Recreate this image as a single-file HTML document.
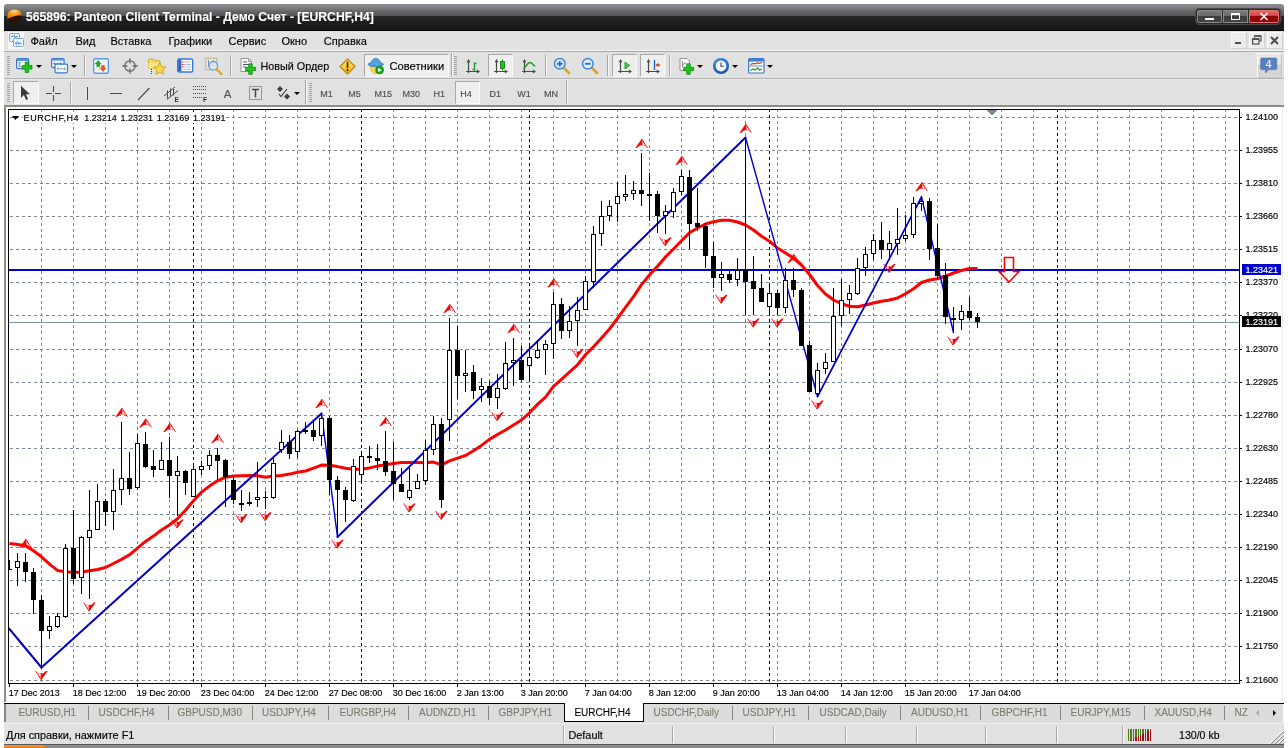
<!DOCTYPE html>
<html><head><meta charset="utf-8"><title>565896: Panteon Client Terminal</title>
<style>
html,body{margin:0;padding:0}
body{width:1288px;height:748px;background:#fff;position:relative;overflow:hidden;font-family:"Liberation Sans",sans-serif;font-size:11px;color:#000}
.abs{position:absolute}
div,span{box-sizing:border-box}
body{will-change:transform}
.t{position:absolute;white-space:pre;line-height:14px;-webkit-text-stroke:0.15px}
.sep{position:absolute;width:2px;border-left:1px solid #a6a6a6;border-right:1px solid #f6f6f6}
.grip{position:absolute;width:3px;background:repeating-linear-gradient(to bottom,#a2a2a2 0,#a2a2a2 1px,transparent 1px,transparent 2px)}
.pr{position:absolute;background:#efefef;border:1px solid;border-color:#a9a9a9 #fbfbfb #fbfbfb #a9a9a9}
.dd{position:absolute;width:0;height:0;border-left:3px solid transparent;border-right:3px solid transparent;border-top:3px solid #000}
.tf{-webkit-text-stroke:0.12px;position:absolute;top:86.5px;font-size:9px;color:#4a4a4a;line-height:14px;white-space:pre}
.tab{-webkit-text-stroke:0.12px;position:absolute;top:706px;font-size:10px;color:#7e7c6c;line-height:14px;white-space:pre}
.tsep{position:absolute;top:706px;width:1px;height:14px;background:#8a8878}
.ssep{position:absolute;top:726px;width:2px;height:17px;border-left:1px solid #a9a9a9;border-right:1px solid #fafafa}
.mdi{position:absolute;top:32px;width:16px;height:17px;background:#ececec;border:1px solid;border-color:#f8f8f8 #d2d2d2 #d2d2d2 #f8f8f8}
</style></head><body>

<div class="abs" style="left:4px;top:4px;width:1280px;height:27px;border-radius:3px 3px 0 0;background:linear-gradient(to bottom,#85868a 0,#8c8d91 1px,#7d7e82 4px,#626365 8px,#545456 12px,#252628 12.3px,#1c1c1e 20px,#19191b 26px,#000 26px,#000 27px)"></div>
<svg class="abs" style="left:6px;top:8px" width="17" height="18" viewBox="0 0 17 18"><defs><radialGradient id="og" cx="50%" cy="20%" r="70%"><stop offset="0" stop-color="#ffd79a"/><stop offset=".5" stop-color="#f79a1e"/><stop offset="1" stop-color="#e07a00"/></radialGradient></defs>
<ellipse cx="8.3" cy="9" rx="7" ry="7.6" fill="#2a1200"/><path d="M1.3 9.5C1 4 4 1.2 8.3 1.2S15.6 4 15.3 7.2C11 7.2 5 8.5 1.3 11Z" fill="url(#og)"/></svg>
<div class="t" style="left:26px;top:9px;font-size:12.2px;font-weight:bold;color:#fff;line-height:16px;letter-spacing:-0.01px;text-shadow:0 0 1px rgba(0,0,0,.6)">565896: Panteon Client Terminal - Демо Счет - [EURCHF,H4]</div>
<div class="abs" style="left:1195px;top:8px;width:86px;height:17px;border-radius:4px;background:#2a2a2c;border:1px solid #4a4a4c"></div>
<div class="abs" style="left:1197px;top:10px;width:25px;height:13px;border-radius:2px 0 0 2px;border:1px solid #8a8a8a;background:linear-gradient(to bottom,#7a7a7a 0,#6a6a6a 48%,#3c3c3c 50%,#444 100%)"></div>
<div class="abs" style="left:1223px;top:10px;width:25px;height:13px;border:1px solid #8a8a8a;background:linear-gradient(to bottom,#7a7a7a 0,#6a6a6a 48%,#3c3c3c 50%,#444 100%)"></div>
<div class="abs" style="left:1249px;top:10px;width:30px;height:13px;border-radius:0 2px 2px 0;border:1px solid #e07070;background:linear-gradient(to bottom,#e86a6a 0,#d24040 48%,#8c0000 50%,#980808 100%)"></div>
<div class="abs" style="left:1205px;top:18px;width:9px;height:2px;background:#fff"></div>
<div class="abs" style="left:1231px;top:13px;width:9px;height:7px;border:1px solid #fff;border-top-width:2px"></div>
<svg class="abs" style="left:1259px;top:12px" width="10" height="9" viewBox="0 0 10 9"><path d="M1.5 1L8.5 8M8.5 1L1.5 8" stroke="#fff" stroke-width="1.7"/></svg>
<div class="abs" style="left:4px;top:31px;width:1280px;height:19px;background:#e2e2e2"></div>
<div class="abs" style="left:4px;top:50px;width:1280px;height:1px;background:#f4f4f4"></div>
<div class="abs" style="left:4px;top:51px;width:1280px;height:1px;background:#a9a9a9"></div>
<div class="abs" style="left:8px;top:32px;width:16px;height:17px;background:#fbfbfb"></div>
<svg class="abs" style="left:9px;top:33px" width="15" height="15" viewBox="0 0 15 15" fill="none"><rect x=".5" y=".5" width="10" height="8" rx="1" fill="#e8f0fb" stroke="#3a76d0" stroke-dasharray="1 .6"/><rect x="4.5" y="5.5" width="10" height="8" rx="1" fill="#f4f8ff" stroke="#3a76d0" stroke-dasharray="1 .6"/><path d="M2 3.5h2l1 -1.5 1 3 1-1.5h2" stroke="#3a76d0" stroke-width=".8"/><path d="M6 9.5l1.2 2 1.3-3 1.3 3 1.2-2 1.3 1.6" stroke="#3a76d0" stroke-width=".9"/></svg>
<div class="t" style="left:30.5px;top:34px;font-size:11px">Файл</div>
<div class="t" style="left:75.5px;top:34px;font-size:11px">Вид</div>
<div class="t" style="left:110.5px;top:34px;font-size:11px">Вставка</div>
<div class="t" style="left:168.5px;top:34px;font-size:11px">Графики</div>
<div class="t" style="left:228.5px;top:34px;font-size:11px">Сервис</div>
<div class="t" style="left:281.5px;top:34px;font-size:11px">Окно</div>
<div class="t" style="left:323.8px;top:34px;font-size:11px">Справка</div>
<div class="mdi" style="left:1231px"></div><div class="mdi" style="left:1249px"></div><div class="mdi" style="left:1267px"></div>
<div class="abs" style="left:1235px;top:42px;width:6px;height:2px;background:#4c4c4c"></div>
<svg class="abs" style="left:1252px;top:35px" width="10" height="10" viewBox="0 0 10 10" fill="none" stroke="#4c4c4c"><path d="M2.5 2.5V1H9v5H7.5" stroke-width="1.2"/><path d="M2.5 1H9" stroke-width="1.6"/><rect x=".6" y="4" width="6.4" height="5" stroke-width="1.2"/><path d="M.6 4H7" stroke-width="1.8"/></svg>
<svg class="abs" style="left:1270px;top:36px" width="9" height="9" viewBox="0 0 9 9"><path d="M1 1L8 8M8 1L1 8" stroke="#4c4c4c" stroke-width="2"/></svg>
<div class="abs" style="left:4px;top:52px;width:1280px;height:26px;background:#e1e1e1"></div>
<div class="abs" style="left:4px;top:78px;width:1280px;height:1px;background:#b2b2b2"></div>
<div class="abs" style="left:4px;top:79px;width:1280px;height:26px;background:linear-gradient(to bottom,#f0f0f0 0,#e1e1e1 1px,#e1e1e1 100%)"></div>
<div class="grip" style="left:7px;top:56px;height:19px"></div>
<svg class="abs" style="left:16px;top:57px" width="18" height="17" viewBox="0 0 18 17" fill="none" ><rect x=".6" y="1.6" width="12" height="10" rx="1.2" fill="#eaf2fc" stroke="#3b78c8" stroke-width="1.2"/><rect x="1" y="2" width="11.2" height="2" fill="#5b93dc"/><path d="M3.5 5v5M2.4 6.2L3.5 5l1.1 1.2M2.4 8.8L3.5 10l1.1-1.2" stroke="#6a8ab0" stroke-width=".8"/><path d="M6.2 8.6h3v-3.5h3.4v3.5h3.4v3.4h-3.4v3.6h-3.4v-3.6h-3.4z" fill="#1fc21f" stroke="#0a8a0a" stroke-width=".8"/></svg>
<div class="dd" style="left:36px;top:65px"></div>
<svg class="abs" style="left:51px;top:57px" width="18" height="17" viewBox="0 0 18 17" fill="none" ><rect x=".6" y="1.6" width="12.5" height="9" rx="1.2" fill="#eaf2fc" stroke="#3b78c8" stroke-width="1.2"/><rect x="1" y="2" width="11.6" height="1.6" fill="#5b93dc"/><path d="M2.5 6.5h8M2.5 6.5l1.3-1.2M2.5 6.5l1.3 1.2M10.5 6.5l-1.3-1.2M10.5 6.5l-1.3 1.2" stroke="#6a8ab0" stroke-width=".8"/><rect x="4" y="7.2" width="12.5" height="8.6" rx="1.2" fill="#f2f7fd" stroke="#3b78c8" stroke-width="1.2"/><path d="M6 11.8h8.5M6 11.8l1.3-1.2M6 11.8l1.3 1.2M14.5 11.8l-1.3-1.2M14.5 11.8l-1.3 1.2" stroke="#6a8ab0" stroke-width=".8"/></svg>
<div class="dd" style="left:71px;top:65px"></div>
<div class="sep" style="left:84px;top:55px;height:21px"></div>
<svg class="abs" style="left:93px;top:58px" width="17" height="17" viewBox="0 0 17 17" fill="none" ><rect x=".7" y=".7" width="14.6" height="14.6" rx="1.5" fill="#f8fbff" stroke="#5a9be6" stroke-width="1.4"/><path d="M9 4h5M9 6h5M9 8h5M2 10h5M2 12h5" stroke="#d8dde4" stroke-width=".8"/><path d="M5.2 2.6L8.2 6H6.6v2.6H3.8V6H2.2Z" fill="#22b022" stroke="#0d7a0d" stroke-width=".5"/><path d="M10 13.6L7 10.2h1.6V7.6h2.8v2.6H13Z" fill="#f05a28" stroke="#b83a10" stroke-width=".5"/></svg>
<svg class="abs" style="left:121px;top:57px" width="18" height="18" viewBox="0 0 18 18" fill="none" ><circle cx="9" cy="9" r="5.2" stroke="#6a6a6a" stroke-width="1.3"/><path d="M9 1.2V6.4M9 11.6V16.8M1.2 9H6.4M11.6 9H16.8" stroke="#6a6a6a" stroke-width="1.3"/></svg>
<svg class="abs" style="left:147px;top:57px" width="20" height="19" viewBox="0 0 20 19" fill="none" ><path d="M1.5 3.5c0-1 .6-1.6 1.6-1.6h3l1.4 1.6h4.2c.8 0 1.3.5 1.3 1.3v6.6H1.5z" fill="#f3d76b" stroke="#c9a227" stroke-width=".9"/><path d="M1.5 6h11.5v5.4H1.5z" fill="#fbe88e"/><path d="M4.5 12v6" stroke="#333" stroke-width="1" stroke-dasharray="1 1"/><path d="M12.8 5.8l1.9 3.9 4.2.5-3.1 2.9.8 4.2-3.8-2.1-3.8 2.1.8-4.2-3.1-2.9 4.2-.5z" fill="#ffd84a" stroke="#c9981a" stroke-width=".9"/></svg>
<svg class="abs" style="left:177px;top:58px" width="17" height="16" viewBox="0 0 17 16" fill="none" ><rect x=".7" y="1" width="15" height="13" rx="1.5" fill="#fff" stroke="#3b78d8" stroke-width="1.4"/><rect x="1.2" y="1.6" width="3.2" height="11.8" fill="#2f62c4"/><path d="M6 4h8M6 6.5h8M6 9h8M6 11.5h8" stroke="#9ab0d0" stroke-width=".8"/><path d="M5 4h1.2M5 6.5h1.2M5 9h1.2" stroke="#e02020" stroke-width="1"/></svg>
<svg class="abs" style="left:205px;top:57px" width="19" height="19" viewBox="0 0 19 19" fill="none" ><rect x=".8" y="1.2" width="11" height="11.5" fill="#f1ead6" stroke="#b9ad8c" stroke-width=".9"/><path d="M3.5 3v7M3.5 8.5h6M8.5 3v6" stroke="#6e7f96" stroke-width=".9"/><circle cx="8.3" cy="8.8" r="4.3" fill="#d6e8fa" fill-opacity=".85" stroke="#6aa0dc" stroke-width="1.3"/><path d="M11.6 12.2l5 5" stroke="#d9a520" stroke-width="2.2" stroke-linecap="round"/></svg>
<div class="sep" style="left:230px;top:55px;height:21px"></div>
<svg class="abs" style="left:240px;top:57px" width="18" height="19" viewBox="0 0 18 19" fill="none" ><path d="M1 1.5h7.5l3 3v10H1z" fill="#fafafa" stroke="#8a8a8a" stroke-width=".9"/><path d="M8.5 1.5v3h3" stroke="#8a8a8a" stroke-width=".8"/><path d="M3 5h4M3 7.5h6M3 10h3" stroke="#555" stroke-width="1"/><path d="M5.8 10.3h3v-3.5h3.4v3.5h3.4v3.4h-3.4v3.6h-3.4v-3.6h-3.4z" fill="#1fc21f" stroke="#0a8a0a" stroke-width=".8"/></svg>
<div class="t" style="left:260.5px;top:59px;font-size:10.8px">Новый Ордер</div>
<svg class="abs" style="left:339px;top:58px" width="17" height="17" viewBox="0 0 17 17" fill="none" ><defs><linearGradient id="dg" x1="0" y1="0" x2="0" y2="1"><stop offset="0" stop-color="#ffe88a"/><stop offset="1" stop-color="#f0b000"/></linearGradient></defs><path d="M8.5 1L16 8.500 8.500 16 1 8.500Z" fill="url(#dg)" stroke="#c28a00" stroke-width="1.2" stroke-linejoin="round"/><path d="M8.500 4.500v5" stroke="#5a3a00" stroke-width="1.8" stroke-linecap="round"/><circle cx="8.500" cy="12.200" r="1.100" fill="#5a3a00"/></svg>
<div class="pr" style="left:364px;top:54px;width:85px;height:23px"></div>
<svg class="abs" style="left:367px;top:57px" width="18" height="18" viewBox="0 0 18 18" fill="none" ><path d="M3 8.5c0 5 2.4 8 5.6 8s5.6-3 5.6-8z" fill="#ffd54a" stroke="#d9a520" stroke-width=".7"/><path d="M.8 7.4c1-1.2 2.6-1.6 3.4-1.8C4.6 3 6.4 1.4 8.8 1.4s4.2 1.6 4.6 4.2c1.4.2 2.6.8 3.4 1.8-1.6 1.6-4.6 2.4-8 2.4s-6.400-.8-8-2.400z" fill="#4fa3e0" stroke="#2a78b8" stroke-width=".7"/><circle cx="12.6" cy="13" r="4" fill="#1aa51a" stroke="#0b7a0b" stroke-width=".6"/><path d="M11.200 10.800v4.400l3.600-2.200z" fill="#fff"/></svg>
<div class="t" style="left:389.500px;top:59px;font-size:11.200px">Советники</div>
<div class="sep" style="left:451px;top:53px;height:24px"></div>
<div class="grip" style="left:454px;top:56px;height:19px"></div>
<svg class="abs" style="left:465px;top:59px" width="16" height="16" viewBox="0 0 16 16" fill="none" ><path d="M3.5 1.5V14M1 12.5H14" stroke="#4a4a4a" stroke-width="1.2"/><path d="M3.5 0L1.6 3.2H5.4ZM15 12.5L11.8 10.6V14.4Z" fill="#4a4a4a"/><path d="M9.500 3.500v8M7.500 10.500h2M9.500 4.500h2" stroke="#1a9a1a" stroke-width="1.300"/></svg>
<div class="pr" style="left:488px;top:54px;width:25px;height:23px"></div>
<svg class="abs" style="left:493px;top:59px" width="16" height="16" viewBox="0 0 16 16" fill="none" ><path d="M3.5 1.5V14M1 12.5H14" stroke="#4a4a4a" stroke-width="1.2"/><path d="M3.5 0L1.6 3.2H5.4ZM15 12.5L11.8 10.6V14.4Z" fill="#4a4a4a"/><path d="M9.500 .5v11" stroke="#1a7a1a" stroke-width="1"/><rect x="7.500" y="2.500" width="4" height="7" fill="#22c022" stroke="#0d7a0d" stroke-width=".8"/></svg>
<svg class="abs" style="left:521px;top:59px" width="16" height="16" viewBox="0 0 16 16" fill="none" ><path d="M3.5 1.5V14M1 12.5H14" stroke="#4a4a4a" stroke-width="1.2"/><path d="M3.5 0L1.6 3.2H5.4ZM15 12.5L11.8 10.6V14.4Z" fill="#4a4a4a"/><path d="M2.500 10.500C5 7 7 3.500 9 3.500s3.500 2.500 5 4" stroke="#1a9a1a" stroke-width="1.300"/></svg>
<div class="sep" style="left:545px;top:55px;height:21px"></div>
<svg class="abs" style="left:553px;top:57px" width="18" height="18" viewBox="0 0 18 18" fill="none" ><path d="M10.600 10.600l5.400 5.400" stroke="#d9a520" stroke-width="2.600" stroke-linecap="round"/><circle cx="6.800" cy="6.800" r="5.300" fill="#dcecfb" stroke="#3f86dc" stroke-width="1.500"/><path d="M4 6.800h5.600" stroke="#2a6fcf" stroke-width="1.800"/><path d="M6.800 4v5.600" stroke="#2a6fcf" stroke-width="1.800"/></svg>
<svg class="abs" style="left:581px;top:57px" width="18" height="18" viewBox="0 0 18 18" fill="none" ><path d="M10.600 10.600l5.400 5.400" stroke="#d9a520" stroke-width="2.600" stroke-linecap="round"/><circle cx="6.800" cy="6.800" r="5.300" fill="#dcecfb" stroke="#3f86dc" stroke-width="1.500"/><path d="M4 6.800h5.600" stroke="#2a6fcf" stroke-width="1.800"/></svg>
<div class="sep" style="left:607px;top:55px;height:21px"></div>
<div class="pr" style="left:612px;top:54px;width:25px;height:23px"></div>
<svg class="abs" style="left:617px;top:59px" width="16" height="16" viewBox="0 0 16 16" fill="none" ><path d="M3.5 1.5V14M1 12.5H14" stroke="#4a4a4a" stroke-width="1.2"/><path d="M3.5 0L1.6 3.2H5.4ZM15 12.5L11.8 10.6V14.4Z" fill="#4a4a4a"/><path d="M8 3.200v6.600l4.600-3.300z" fill="#5ad05a" stroke="#1a9a1a" stroke-width="1"/></svg>
<div class="pr" style="left:640px;top:54px;width:25px;height:23px"></div>
<svg class="abs" style="left:645px;top:59px" width="16" height="16" viewBox="0 0 16 16" fill="none" ><path d="M3.5 1.5V14M1 12.5H14" stroke="#4a4a4a" stroke-width="1.2"/><path d="M3.5 0L1.6 3.2H5.4ZM15 12.5L11.8 10.6V14.4Z" fill="#4a4a4a"/><path d="M9.500 1v10" stroke="#1f5fb8" stroke-width="1.300"/><path d="M10.400 6l3-2.200v1.400h1.600v1.600h-1.600v1.400z" fill="#d84a10"/></svg>
<div class="sep" style="left:669px;top:55px;height:21px"></div>
<svg class="abs" style="left:679px;top:57px" width="18" height="19" viewBox="0 0 18 19" fill="none" ><path d="M1 1.500h7l2.500 2.500v9.500H1z" fill="#fafafa" stroke="#8a8a8a" stroke-width=".9"/><path d="M3.500 4v6M3 9c1.500-2 2.500-3 4-3" stroke="#777" stroke-width=".9"/><path d="M4.8 10.3h3v-3.5h3.4v3.5h3.4v3.4h-3.4v3.6h-3.4v-3.6h-3.4z" fill="#1fc21f" stroke="#0a8a0a" stroke-width=".8"/></svg>
<div class="dd" style="left:697px;top:65px"></div>
<svg class="abs" style="left:712px;top:57px" width="18" height="18" viewBox="0 0 18 18" fill="none" ><defs><radialGradient id="cg" cx="45%" cy="35%" r="65%"><stop offset="0" stop-color="#5aa8f0"/><stop offset="1" stop-color="#0d4fb0"/></radialGradient></defs><circle cx="9" cy="9" r="8" fill="url(#cg)"/><circle cx="9" cy="9" r="5.400" fill="#f4f8fc"/><path d="M9 5.500V9.300h2.800" stroke="#444" stroke-width="1.100"/></svg>
<div class="dd" style="left:732px;top:65px"></div>
<svg class="abs" style="left:748px;top:58px" width="17" height="16" viewBox="0 0 17 16" fill="none" ><rect x=".6" y=".6" width="15.400" height="14.400" rx="1" fill="#fff" stroke="#3b78c8" stroke-width="1.200"/><rect x="1" y="1" width="14.600" height="2.600" fill="#3f7fd6"/><path d="M1 8h14.600" stroke="#3b78c8" stroke-width=".8"/><path d="M2.500 6.500l2.500-1 2 .5 2.500-1.200 2 .7 2.500-1" stroke="#c0281a" stroke-width="1.100"/><path d="M2.500 12.500l2.500-1.500 2 1 2.500-2 2 2 2.500-1" stroke="#1a9a1a" stroke-width="1.100"/></svg>
<div class="dd" style="left:767px;top:65px"></div>
<div class="abs" style="left:1257px;top:53px;width:25px;height:25px;background:linear-gradient(to bottom,#e6e6e6 0,#e6e6e6 45%,#cfcfcf 50%,#d8d8d8 100%);border:1px solid;border-color:#fafafa #c8c8c8 #c8c8c8 #fafafa"></div>
<svg class="abs" style="left:1260px;top:57px" width="18" height="17" viewBox="0 0 18 17" fill="none" ><path d="M2 1h13.500c.8 0 1.300.5 1.300 1.300v9c0 .8-.5 1.300-1.300 1.300H8.500L5.500 16V12.600H2C1.200 12.600.7 12.100.7 11.300v-9C.7 1.500 1.200 1 2 1z" fill="#5b7fbe" stroke="#4a6cab" stroke-width=".6"/><text x="5.600" y="10.600" font-size="11" fill="#fff" font-family="'Liberation Sans',sans-serif">4</text></svg>
<div class="grip" style="left:7px;top:83px;height:19px"></div>
<div class="pr" style="left:13px;top:81px;width:26px;height:23px"></div>
<svg class="abs" style="left:20px;top:85px" width="11" height="16" viewBox="0 0 11 16" fill="none" ><path d="M1 .8v12l2.900-2.700 2.200 4.800 2-.9-2.200-4.700h4z" fill="#3c3c3c"/></svg>
<svg class="abs" style="left:45px;top:85px" width="17" height="17" viewBox="0 0 17 17" fill="none" ><path d="M8.500 1v6M8.500 10v6M1 8.500h6M10 8.500h6" stroke="#4a4a4a" stroke-width="1.100"/></svg>
<div class="sep" style="left:70px;top:82px;height:21px"></div>
<div class="abs" style="left:87px;top:87px;width:1px;height:13px;background:#4a4a4a"></div>
<div class="abs" style="left:110px;top:93px;width:12px;height:1px;background:#4a4a4a"></div>
<svg class="abs" style="left:137px;top:86px" width="14" height="15" viewBox="0 0 14 15" fill="none" ><path d="M1 14L12.500 2" stroke="#4a4a4a" stroke-width="1.100"/></svg>
<svg class="abs" style="left:163px;top:85px" width="17" height="17" viewBox="0 0 17 17" fill="none" ><path d="M1 11L12 2M4 14.500L15 5.500M4.500 5.500v8M7.500 3.500v8M10.500 4v6.500" stroke="#4a4a4a" stroke-width="1"/><text x="11.500" y="16.500" font-size="6.500" font-weight="bold" fill="#333" font-family="'Liberation Sans',sans-serif">E</text></svg>
<svg class="abs" style="left:192px;top:85px" width="17" height="17" viewBox="0 0 17 17" fill="none" ><path d="M1 1.500h13M1 4.500h13M1 8.500h13M1 12.500h9" stroke="#4a4a4a" stroke-width="1" stroke-dasharray="1 1"/><text x="11" y="16.500" font-size="6.500" font-weight="bold" fill="#333" font-family="'Liberation Sans',sans-serif">F</text></svg>
<div class="t" style="left:223.800px;top:87px;font-size:11.500px;color:#555">A</div>
<svg class="abs" style="left:249px;top:85px" width="14" height="16" viewBox="0 0 14 16" fill="none" ><rect x=".5" y="1.500" width="12" height="13" stroke="#4a4a4a" stroke-width="1" stroke-dasharray="1 1"/><path d="M3 4.500h7M6.500 4.500v8" stroke="#4a4a4a" stroke-width="1.500"/></svg>
<svg class="abs" style="left:276px;top:85px" width="16" height="16" viewBox="0 0 16 16" fill="none" ><path d="M4 1l3 3-3 3-3-3zM11 8.500l3 3-3 3-3-3z" fill="#3c3c3c"/><path d="M3 9l2 2.500L11 4" stroke="#3c3c3c" stroke-width="1.100"/></svg>
<div class="dd" style="left:294px;top:92px"></div>
<div class="sep" style="left:305px;top:80px;height:24px"></div>
<div class="grip" style="left:309px;top:83px;height:19px"></div>
<div class="tf" style="left:320.3px">M1</div>
<div class="tf" style="left:348.3px">M5</div>
<div class="tf" style="left:374.4px">M15</div>
<div class="tf" style="left:402.5px">M30</div>
<div class="tf" style="left:433.5px">H1</div>
<div class="tf" style="left:489.4px">D1</div>
<div class="tf" style="left:517.2px">W1</div>
<div class="tf" style="left:543.9px">MN</div>
<div class="pr" style="left:455px;top:81px;width:25px;height:23px"></div>
<div class="tf" style="left:460.300px">H4</div>
<div class="sep" style="left:566px;top:80px;height:24px"></div>
<svg class="abs" style="left:0;top:105px" width="1288" height="598" viewBox="0 105 1288 598" font-family="'Liberation Sans',sans-serif" font-size="9" stroke-width="0.16">
<rect x="4" y="105" width="1280" height="598" fill="#fff"/>
<rect x="4" y="105" width="1280" height="2" fill="#8e8e86"/>
<rect x="4" y="105" width="2" height="597" fill="#8e8e86"/>
<rect x="1282" y="107" width="1" height="595" fill="#ececec"/>
<g shape-rendering="crispEdges">
<g stroke="#778899" stroke-width="1" stroke-dasharray="3 3" fill="none">
<path d="M9 117.5H1239" stroke-dashoffset="5"/>
<path d="M9 150.5H1239" stroke-dashoffset="5"/>
<path d="M9 183.5H1239" stroke-dashoffset="5"/>
<path d="M9 216.5H1239" stroke-dashoffset="5"/>
<path d="M9 249.5H1239" stroke-dashoffset="5"/>
<path d="M9 282.5H1239" stroke-dashoffset="5"/>
<path d="M9 315.5H1239" stroke-dashoffset="5"/>
<path d="M9 349.5H1239" stroke-dashoffset="5"/>
<path d="M9 382.5H1239" stroke-dashoffset="5"/>
<path d="M9 415.5H1239" stroke-dashoffset="5"/>
<path d="M9 448.5H1239" stroke-dashoffset="5"/>
<path d="M9 481.5H1239" stroke-dashoffset="5"/>
<path d="M9 514.5H1239" stroke-dashoffset="5"/>
<path d="M9 547.5H1239" stroke-dashoffset="5"/>
<path d="M9 580.5H1239" stroke-dashoffset="5"/>
<path d="M9 613.5H1239" stroke-dashoffset="5"/>
<path d="M9 646.5H1239" stroke-dashoffset="5"/>
<path d="M9 680.5H1239" stroke-dashoffset="5"/>
<path d="M41.5 110V683" stroke-dashoffset="1"/>
<path d="M73.5 110V683" stroke-dashoffset="1"/>
<path d="M105.5 110V683" stroke-dashoffset="1"/>
<path d="M137.5 110V683" stroke-dashoffset="1"/>
<path d="M169.5 110V683" stroke-dashoffset="1"/>
<path d="M201.5 110V683" stroke-dashoffset="1"/>
<path d="M233.5 110V683" stroke-dashoffset="1"/>
<path d="M265.5 110V683" stroke-dashoffset="1"/>
<path d="M297.5 110V683" stroke-dashoffset="1"/>
<path d="M329.5 110V683" stroke-dashoffset="1"/>
<path d="M361.5 110V683" stroke-dashoffset="1" stroke="#000"/>
<path d="M393.5 110V683" stroke-dashoffset="1"/>
<path d="M425.5 110V683" stroke-dashoffset="1"/>
<path d="M457.5 110V683" stroke-dashoffset="1"/>
<path d="M489.5 110V683" stroke-dashoffset="1"/>
<path d="M521.5 110V683" stroke-dashoffset="1"/>
<path d="M553.5 110V683" stroke-dashoffset="1"/>
<path d="M585.5 110V683" stroke-dashoffset="1"/>
<path d="M617.5 110V683" stroke-dashoffset="1"/>
<path d="M649.5 110V683" stroke-dashoffset="1"/>
<path d="M681.5 110V683" stroke-dashoffset="1"/>
<path d="M713.5 110V683" stroke-dashoffset="1"/>
<path d="M745.5 110V683" stroke-dashoffset="1"/>
<path d="M777.5 110V683" stroke-dashoffset="1"/>
<path d="M809.5 110V683" stroke-dashoffset="1"/>
<path d="M841.5 110V683" stroke-dashoffset="1"/>
<path d="M873.5 110V683" stroke-dashoffset="1"/>
<path d="M905.5 110V683" stroke-dashoffset="1"/>
<path d="M937.5 110V683" stroke-dashoffset="1"/>
<path d="M969.5 110V683" stroke-dashoffset="1"/>
<path d="M1001.5 110V683" stroke-dashoffset="1"/>
<path d="M1033.5 110V683" stroke-dashoffset="1"/>
<path d="M1065.5 110V683" stroke-dashoffset="1"/>
<path d="M1097.5 110V683" stroke-dashoffset="1"/>
<path d="M1129.5 110V683" stroke-dashoffset="1"/>
<path d="M1161.5 110V683" stroke-dashoffset="1"/>
<path d="M1193.5 110V683" stroke-dashoffset="1"/>
<path d="M1225.5 110V683" stroke-dashoffset="1"/>
<path d="M193.5 110V683" stroke-dashoffset="1" stroke="#000"/>
<path d="M361.5 110V683" stroke-dashoffset="1" stroke="#000"/>
<path d="M529.5 110V683" stroke-dashoffset="1" stroke="#000"/>
<path d="M769.5 110V683" stroke-dashoffset="1" stroke="#000"/>
<path d="M1057.5 110V683" stroke-dashoffset="1" stroke="#000"/>
</g>
<rect x="9" y="322" width="1230" height="1" fill="#7f8fa4"/>
<rect x="9" y="269" width="1230" height="2" fill="#0000cd"/>
</g>
<polyline points="9.5,543.4 17.5,544.5 25.5,545.8 33.5,550.8 41.5,556.8 49.5,564.1 57.5,570.4 65.5,571.7 73.5,572.5 81.5,572.1 89.5,570.8 97.5,569.5 105.5,567.5 113.5,563.5 121.5,559.4 129.5,554.8 137.5,548.1 145.5,541.4 153.5,536.1 161.5,530 169.5,524.9 177.5,518.8 185.5,510.2 193.5,500.8 201.5,492.1 209.5,486.1 217.5,480.8 225.5,477.2 233.5,476.1 241.5,475.8 249.5,475.4 257.5,475.8 265.5,477.2 273.5,476.1 281.5,475.4 289.5,474.1 297.5,472.3 305.5,471 313.5,468.1 321.5,465.1 329.5,465.3 337.5,466.6 345.5,468.2 353.5,469.2 361.5,469.2 369.5,467.9 377.5,466.1 385.5,464.8 393.5,463.5 401.5,462.5 409.5,462.5 417.5,462.5 425.5,462.8 433.5,462.1 441.5,464.8 449.5,460.8 457.5,458.1 465.5,455.5 473.5,450.8 481.5,445.4 489.5,439.4 497.5,434.5 505.5,430 513.5,425 521.5,420 529.5,412.8 537.5,404.4 545.5,397.2 553.5,386.4 561.5,379.4 569.5,372 577.5,364.8 585.5,354.7 593.5,346.7 601.5,338 609.5,329 617.5,318.4 625.5,307.4 633.5,296.7 641.5,284.6 649.5,275 657.5,266.3 665.5,257 673.5,249 681.5,240.7 689.5,232.7 697.5,228 705.5,224 713.5,221.7 721.5,220.2 729.5,220.2 737.5,222 745.5,225 753.5,230 761.5,236.25 769.5,241.25 777.5,248 785.5,253 793.5,258 801.5,265 809.5,274.5 817.5,285.5 825.5,294 833.5,300 841.5,303.75 849.5,306.25 857.5,306.75 865.5,305 873.5,303 881.5,301.25 889.5,300 897.5,298 905.5,293.75 913.5,288.75 921.5,282.5 929.5,280 937.5,278.75 945.5,276.25 953.5,273 961.5,270.5 969.5,268.5 977.5,268.5" fill="none" stroke="#ff0000" stroke-width="3" stroke-linejoin="round" stroke-linecap="butt"/>
<path d="M9 628.5L41.5 667.5" fill="none" stroke="#0000cd" stroke-width="2" stroke-linecap="round"/>
<path d="M41.5 667.5L321.5 413.5" fill="none" stroke="#0000cd" stroke-width="2" stroke-linecap="round"/>
<path d="M321.5 413.5L337.5 537" fill="none" stroke="#0000cd" stroke-width="1.4" stroke-linecap="round"/>
<path d="M337.5 537L745.5 137.5" fill="none" stroke="#0000cd" stroke-width="2" stroke-linecap="round"/>
<path d="M745.5 137.5L817.5 396.5" fill="none" stroke="#0000cd" stroke-width="1.4" stroke-linecap="round"/>
<path d="M817.5 396.5L921.5 197" fill="none" stroke="#0000cd" stroke-width="1.7" stroke-linecap="round"/>
<path d="M921.5 197L953.5 332.5" fill="none" stroke="#0000cd" stroke-width="1.4" stroke-linecap="round"/>
<defs>
<g id="fu"><path d="M0.3 0L-6.2 9.2L-4.4 9.1L-1.6 6.7L0.7 6.5L0.9 3.4L0.8 1Z" fill="#ff0000"/><path d="M0.5 0.6L5.9 9.1" stroke="#ff0000" stroke-width="0.9" fill="none"/><path d="M0.8 6.4L3.6 6.6M1.8 3.2L2 4.6" stroke="#ff0000" stroke-width="0.8" stroke-dasharray="1 0.8" fill="none"/></g>
<g id="fd"><path d="M-0.3 9.4L6.2 0.2L4.4 0.3L1.6 2.7L-0.7 2.9L-0.9 6L-0.8 8.4Z" fill="#ff0000"/><path d="M-0.5 8.8L-5.9 0.3" stroke="#ff0000" stroke-width="0.9" fill="none"/><path d="M-0.8 3L-3.6 2.800M-1.8 6.200L-2 4.800" stroke="#ff0000" stroke-width="0.8" stroke-dasharray="1 0.8" fill="none"/></g>
</defs>
<use href="#fu" x="25.5" y="538.7"/>
<use href="#fu" x="121.5" y="407.7"/>
<use href="#fu" x="145.5" y="418.2"/>
<use href="#fu" x="169.5" y="422.7"/>
<use href="#fu" x="217.5" y="433.7"/>
<use href="#fu" x="321.5" y="398.7"/>
<use href="#fu" x="385.5" y="416.95"/>
<use href="#fu" x="449.5" y="303.7"/>
<use href="#fu" x="513.5" y="323.7"/>
<use href="#fu" x="553.5" y="278.2"/>
<use href="#fu" x="641.5" y="138.7"/>
<use href="#fu" x="681.5" y="155.7"/>
<use href="#fu" x="745.5" y="123.7"/>
<use href="#fu" x="793.5" y="253.7"/>
<use href="#fu" x="921.5" y="181.95"/>
<use href="#fd" x="41.5" y="670.7"/>
<use href="#fd" x="89.5" y="602.2"/>
<use href="#fd" x="177.5" y="519.2"/>
<use href="#fd" x="241.5" y="513.95"/>
<use href="#fd" x="265.5" y="511.95"/>
<use href="#fd" x="337.5" y="539.45"/>
<use href="#fd" x="409.5" y="503.2"/>
<use href="#fd" x="441.5" y="510.7"/>
<use href="#fd" x="497.5" y="411.95"/>
<use href="#fd" x="577.5" y="348.7"/>
<use href="#fd" x="665.5" y="236.95"/>
<use href="#fd" x="721.5" y="294.45"/>
<use href="#fd" x="753.5" y="318.2"/>
<use href="#fd" x="777.5" y="318.2"/>
<use href="#fd" x="817.5" y="400.2"/>
<use href="#fd" x="889.5" y="263.7"/>
<use href="#fd" x="953.5" y="336.2"/>
<g shape-rendering="crispEdges">
<rect x="9" y="560" width="1" height="10" fill="#000"/><rect x="9" y="569" width="3" height="1" fill="#000"/>
<rect x="17" y="553" width="1" height="33" fill="#000"/>
<rect x="15" y="561" width="5" height="7" fill="#000"/><rect x="16" y="562" width="3" height="5" fill="#fff"/>
<rect x="25" y="553" width="1" height="29" fill="#000"/>
<rect x="23" y="562" width="5" height="10" fill="#000"/>
<rect x="33" y="568" width="1" height="46" fill="#000"/>
<rect x="31" y="572" width="5" height="28" fill="#000"/>
<rect x="41" y="595" width="1" height="73" fill="#000"/>
<rect x="39" y="600" width="5" height="31" fill="#000"/>
<rect x="49" y="616" width="1" height="23" fill="#000"/>
<rect x="47" y="626" width="5" height="5" fill="#000"/><rect x="48" y="627" width="3" height="3" fill="#fff"/>
<rect x="57" y="613" width="1" height="15" fill="#000"/>
<rect x="55" y="616" width="5" height="11" fill="#000"/><rect x="56" y="617" width="3" height="9" fill="#fff"/>
<rect x="65" y="544" width="1" height="74" fill="#000"/>
<rect x="63" y="548" width="5" height="69" fill="#000"/><rect x="64" y="549" width="3" height="67" fill="#fff"/>
<rect x="73" y="510" width="1" height="74" fill="#000"/>
<rect x="71" y="548" width="5" height="31" fill="#000"/>
<rect x="81" y="536" width="1" height="58" fill="#000"/>
<rect x="79" y="537" width="5" height="41" fill="#000"/><rect x="80" y="538" width="3" height="39" fill="#fff"/>
<rect x="89" y="490" width="1" height="109" fill="#000"/>
<rect x="87" y="530" width="5" height="8" fill="#000"/><rect x="88" y="531" width="3" height="6" fill="#fff"/>
<rect x="97" y="484" width="1" height="46" fill="#000"/>
<rect x="95" y="501" width="5" height="29" fill="#000"/><rect x="96" y="502" width="3" height="27" fill="#fff"/>
<rect x="105" y="499" width="1" height="27" fill="#000"/>
<rect x="103" y="501" width="5" height="11" fill="#000"/>
<rect x="113" y="469" width="1" height="61" fill="#000"/>
<rect x="111" y="490" width="5" height="22" fill="#000"/><rect x="112" y="491" width="3" height="20" fill="#fff"/>
<rect x="121" y="422" width="1" height="83" fill="#000"/>
<rect x="119" y="478" width="5" height="12" fill="#000"/><rect x="120" y="479" width="3" height="10" fill="#fff"/>
<rect x="129" y="452" width="1" height="43" fill="#000"/>
<rect x="127" y="478" width="5" height="11" fill="#000"/>
<rect x="137" y="434" width="1" height="56" fill="#000"/>
<rect x="135" y="443" width="5" height="45" fill="#000"/><rect x="136" y="444" width="3" height="43" fill="#fff"/>
<rect x="145" y="432" width="1" height="36" fill="#000"/>
<rect x="143" y="444" width="5" height="23" fill="#000"/>
<rect x="153" y="450" width="1" height="27" fill="#000"/>
<rect x="151" y="466" width="5" height="4" fill="#000"/>
<rect x="161" y="442" width="1" height="28" fill="#000"/>
<rect x="159" y="460" width="5" height="10" fill="#000"/><rect x="160" y="461" width="3" height="8" fill="#fff"/>
<rect x="169" y="437" width="1" height="61" fill="#000"/>
<rect x="167" y="460" width="5" height="16" fill="#000"/>
<rect x="177" y="456" width="1" height="60" fill="#000"/>
<rect x="175" y="471" width="5" height="5" fill="#000"/><rect x="176" y="472" width="3" height="3" fill="#fff"/>
<rect x="185" y="470" width="1" height="25" fill="#000"/>
<rect x="183" y="471" width="5" height="12" fill="#000"/>
<rect x="193" y="464" width="1" height="33" fill="#000"/>
<rect x="191" y="469" width="5" height="28" fill="#000"/><rect x="192" y="470" width="3" height="26" fill="#fff"/>
<rect x="201" y="461" width="1" height="14" fill="#000"/>
<rect x="199" y="466" width="5" height="4" fill="#000"/><rect x="200" y="467" width="3" height="2" fill="#fff"/>
<rect x="209" y="450" width="1" height="20" fill="#000"/>
<rect x="207" y="455" width="5" height="11" fill="#000"/><rect x="208" y="456" width="3" height="9" fill="#fff"/>
<rect x="217" y="448" width="1" height="32" fill="#000"/>
<rect x="215" y="455" width="5" height="6" fill="#000"/>
<rect x="225" y="459" width="1" height="48" fill="#000"/>
<rect x="223" y="460" width="5" height="17" fill="#000"/>
<rect x="233" y="477" width="1" height="27" fill="#000"/>
<rect x="231" y="480" width="5" height="20" fill="#000"/>
<rect x="241" y="490" width="1" height="21" fill="#000"/>
<rect x="239" y="503" width="5" height="2" fill="#000"/>
<rect x="249" y="492" width="1" height="14" fill="#000"/>
<rect x="247" y="502" width="5" height="2" fill="#000"/>
<rect x="257" y="462" width="1" height="45" fill="#000"/>
<rect x="255" y="497" width="5" height="3" fill="#000"/><rect x="256" y="498" width="3" height="1" fill="#fff"/>
<rect x="265" y="491" width="1" height="18" fill="#000"/>
<rect x="263" y="497" width="5" height="1" fill="#000"/>
<rect x="273" y="458" width="1" height="41" fill="#000"/>
<rect x="271" y="463" width="5" height="35" fill="#000"/><rect x="272" y="464" width="3" height="33" fill="#fff"/>
<rect x="281" y="430" width="1" height="23" fill="#000"/>
<rect x="279" y="442" width="5" height="8" fill="#000"/><rect x="280" y="443" width="3" height="6" fill="#fff"/>
<rect x="289" y="435" width="1" height="24" fill="#000"/>
<rect x="287" y="442" width="5" height="12" fill="#000"/>
<rect x="297" y="430" width="1" height="28" fill="#000"/>
<rect x="295" y="431" width="5" height="21" fill="#000"/><rect x="296" y="432" width="3" height="19" fill="#fff"/>
<rect x="305" y="422" width="1" height="12" fill="#000"/>
<rect x="303" y="430" width="5" height="2" fill="#000"/>
<rect x="313" y="421" width="1" height="20" fill="#000"/>
<rect x="311" y="430" width="5" height="7" fill="#000"/>
<rect x="321" y="413" width="1" height="33" fill="#000"/>
<rect x="319" y="418" width="5" height="18" fill="#000"/><rect x="320" y="419" width="3" height="16" fill="#fff"/>
<rect x="329" y="416" width="1" height="79" fill="#000"/>
<rect x="327" y="418" width="5" height="62" fill="#000"/>
<rect x="337" y="476" width="1" height="60" fill="#000"/>
<rect x="335" y="480" width="5" height="10" fill="#000"/>
<rect x="345" y="487" width="1" height="35" fill="#000"/>
<rect x="343" y="490" width="5" height="10" fill="#000"/>
<rect x="353" y="459" width="1" height="43" fill="#000"/>
<rect x="351" y="466" width="5" height="35" fill="#000"/><rect x="352" y="467" width="3" height="33" fill="#fff"/>
<rect x="361" y="451" width="1" height="31" fill="#000"/>
<rect x="359" y="456" width="5" height="19" fill="#000"/><rect x="360" y="457" width="3" height="17" fill="#fff"/>
<rect x="369" y="446" width="1" height="17" fill="#000"/>
<rect x="367" y="456" width="5" height="2" fill="#000"/>
<rect x="377" y="444" width="1" height="26" fill="#000"/>
<rect x="375" y="458" width="5" height="3" fill="#000"/>
<rect x="385" y="431" width="1" height="45" fill="#000"/>
<rect x="383" y="461" width="5" height="11" fill="#000"/>
<rect x="393" y="442" width="1" height="58" fill="#000"/>
<rect x="391" y="471" width="5" height="13" fill="#000"/>
<rect x="401" y="468" width="1" height="24" fill="#000"/>
<rect x="399" y="484" width="5" height="8" fill="#000"/>
<rect x="409" y="468" width="1" height="32" fill="#000"/>
<rect x="407" y="490" width="5" height="8" fill="#000"/><rect x="408" y="491" width="3" height="6" fill="#fff"/>
<rect x="417" y="474" width="1" height="15" fill="#000"/>
<rect x="415" y="481" width="5" height="8" fill="#000"/><rect x="416" y="482" width="3" height="6" fill="#fff"/>
<rect x="425" y="440" width="1" height="45" fill="#000"/>
<rect x="423" y="450" width="5" height="31" fill="#000"/><rect x="424" y="451" width="3" height="29" fill="#fff"/>
<rect x="433" y="416" width="1" height="39" fill="#000"/>
<rect x="431" y="424" width="5" height="26" fill="#000"/><rect x="432" y="425" width="3" height="24" fill="#fff"/>
<rect x="441" y="418" width="1" height="90" fill="#000"/>
<rect x="439" y="424" width="5" height="76" fill="#000"/>
<rect x="449" y="318" width="1" height="123" fill="#000"/>
<rect x="447" y="350" width="5" height="70" fill="#000"/><rect x="448" y="351" width="3" height="68" fill="#fff"/>
<rect x="457" y="326" width="1" height="73" fill="#000"/>
<rect x="455" y="350" width="5" height="26" fill="#000"/>
<rect x="465" y="350" width="1" height="42" fill="#000"/>
<rect x="463" y="373" width="5" height="3" fill="#000"/><rect x="464" y="374" width="3" height="1" fill="#fff"/>
<rect x="473" y="365" width="1" height="34" fill="#000"/>
<rect x="471" y="372" width="5" height="19" fill="#000"/>
<rect x="481" y="378" width="1" height="24" fill="#000"/>
<rect x="479" y="386" width="5" height="4" fill="#000"/><rect x="480" y="387" width="3" height="2" fill="#fff"/>
<rect x="489" y="381" width="1" height="24" fill="#000"/>
<rect x="487" y="386" width="5" height="12" fill="#000"/>
<rect x="497" y="374" width="1" height="35" fill="#000"/>
<rect x="495" y="388" width="5" height="10" fill="#000"/><rect x="496" y="389" width="3" height="8" fill="#fff"/>
<rect x="505" y="342" width="1" height="48" fill="#000"/>
<rect x="503" y="363" width="5" height="26" fill="#000"/><rect x="504" y="364" width="3" height="24" fill="#fff"/>
<rect x="513" y="338" width="1" height="48" fill="#000"/>
<rect x="511" y="360" width="5" height="3" fill="#000"/><rect x="512" y="361" width="3" height="1" fill="#fff"/>
<rect x="521" y="346" width="1" height="36" fill="#000"/>
<rect x="519" y="360" width="5" height="20" fill="#000"/>
<rect x="529" y="343" width="1" height="39" fill="#000"/>
<rect x="527" y="357" width="5" height="9" fill="#000"/><rect x="528" y="358" width="3" height="7" fill="#fff"/>
<rect x="537" y="340" width="1" height="19" fill="#000"/>
<rect x="535" y="350" width="5" height="8" fill="#000"/><rect x="536" y="351" width="3" height="6" fill="#fff"/>
<rect x="545" y="340" width="1" height="35" fill="#000"/>
<rect x="543" y="344" width="5" height="6" fill="#000"/><rect x="544" y="345" width="3" height="4" fill="#fff"/>
<rect x="553" y="292" width="1" height="67" fill="#000"/>
<rect x="551" y="304" width="5" height="40" fill="#000"/><rect x="552" y="305" width="3" height="38" fill="#fff"/>
<rect x="561" y="298" width="1" height="41" fill="#000"/>
<rect x="559" y="304" width="5" height="27" fill="#000"/>
<rect x="569" y="306" width="1" height="32" fill="#000"/>
<rect x="567" y="321" width="5" height="10" fill="#000"/><rect x="568" y="322" width="3" height="8" fill="#fff"/>
<rect x="577" y="297" width="1" height="49" fill="#000"/>
<rect x="575" y="310" width="5" height="11" fill="#000"/><rect x="576" y="311" width="3" height="9" fill="#fff"/>
<rect x="585" y="276" width="1" height="34" fill="#000"/>
<rect x="583" y="281" width="5" height="29" fill="#000"/><rect x="584" y="282" width="3" height="27" fill="#fff"/>
<rect x="593" y="226" width="1" height="62" fill="#000"/>
<rect x="591" y="234" width="5" height="48" fill="#000"/><rect x="592" y="235" width="3" height="46" fill="#fff"/>
<rect x="601" y="201" width="1" height="45" fill="#000"/>
<rect x="599" y="216" width="5" height="18" fill="#000"/><rect x="600" y="217" width="3" height="16" fill="#fff"/>
<rect x="609" y="200" width="1" height="21" fill="#000"/>
<rect x="607" y="206" width="5" height="10" fill="#000"/><rect x="608" y="207" width="3" height="8" fill="#fff"/>
<rect x="617" y="182" width="1" height="40" fill="#000"/>
<rect x="615" y="196" width="5" height="8" fill="#000"/><rect x="616" y="197" width="3" height="6" fill="#fff"/>
<rect x="625" y="175" width="1" height="26" fill="#000"/>
<rect x="623" y="194" width="5" height="3" fill="#000"/><rect x="624" y="195" width="3" height="1" fill="#fff"/>
<rect x="633" y="181" width="1" height="19" fill="#000"/>
<rect x="631" y="190" width="5" height="4" fill="#000"/><rect x="632" y="191" width="3" height="2" fill="#fff"/>
<rect x="641" y="153" width="1" height="53" fill="#000"/>
<rect x="639" y="190" width="5" height="4" fill="#000"/>
<rect x="649" y="173" width="1" height="48" fill="#000"/>
<rect x="647" y="194" width="5" height="2" fill="#000"/>
<rect x="657" y="191" width="1" height="42" fill="#000"/>
<rect x="655" y="194" width="5" height="22" fill="#000"/>
<rect x="665" y="205" width="1" height="29" fill="#000"/>
<rect x="663" y="211" width="5" height="5" fill="#000"/><rect x="664" y="212" width="3" height="3" fill="#fff"/>
<rect x="673" y="188" width="1" height="30" fill="#000"/>
<rect x="671" y="192" width="5" height="20" fill="#000"/><rect x="672" y="193" width="3" height="18" fill="#fff"/>
<rect x="681" y="170" width="1" height="25" fill="#000"/>
<rect x="679" y="176" width="5" height="16" fill="#000"/><rect x="680" y="177" width="3" height="14" fill="#fff"/>
<rect x="689" y="170" width="1" height="79" fill="#000"/>
<rect x="687" y="177" width="5" height="47" fill="#000"/>
<rect x="697" y="188" width="1" height="43" fill="#000"/>
<rect x="695" y="223" width="5" height="4" fill="#000"/>
<rect x="705" y="223" width="1" height="45" fill="#000"/>
<rect x="703" y="226" width="5" height="30" fill="#000"/>
<rect x="713" y="242" width="1" height="46" fill="#000"/>
<rect x="711" y="256" width="5" height="22" fill="#000"/>
<rect x="721" y="262" width="1" height="29" fill="#000"/>
<rect x="719" y="274" width="5" height="4" fill="#000"/><rect x="720" y="275" width="3" height="2" fill="#fff"/>
<rect x="729" y="271" width="1" height="12" fill="#000"/>
<rect x="727" y="274" width="5" height="6" fill="#000"/>
<rect x="737" y="258" width="1" height="28" fill="#000"/>
<rect x="735" y="270" width="5" height="10" fill="#000"/><rect x="736" y="271" width="3" height="8" fill="#fff"/>
<rect x="745" y="138" width="1" height="177" fill="#000"/>
<rect x="743" y="270" width="5" height="12" fill="#000"/>
<rect x="753" y="256" width="1" height="59" fill="#000"/>
<rect x="751" y="281" width="5" height="8" fill="#000"/>
<rect x="761" y="274" width="1" height="28" fill="#000"/>
<rect x="759" y="288" width="5" height="14" fill="#000"/>
<rect x="769" y="285" width="1" height="30" fill="#000"/>
<rect x="767" y="293" width="5" height="14" fill="#000"/><rect x="768" y="294" width="3" height="12" fill="#fff"/>
<rect x="777" y="290" width="1" height="25" fill="#000"/>
<rect x="775" y="293" width="5" height="15" fill="#000"/>
<rect x="785" y="268" width="1" height="45" fill="#000"/>
<rect x="783" y="280" width="5" height="28" fill="#000"/><rect x="784" y="281" width="3" height="26" fill="#fff"/>
<rect x="793" y="268" width="1" height="29" fill="#000"/>
<rect x="791" y="280" width="5" height="10" fill="#000"/>
<rect x="801" y="288" width="1" height="58" fill="#000"/>
<rect x="799" y="290" width="5" height="56" fill="#000"/>
<rect x="809" y="341" width="1" height="51" fill="#000"/>
<rect x="807" y="345" width="5" height="47" fill="#000"/>
<rect x="817" y="363" width="1" height="34" fill="#000"/>
<rect x="815" y="370" width="5" height="24" fill="#000"/><rect x="816" y="371" width="3" height="22" fill="#fff"/>
<rect x="825" y="353" width="1" height="21" fill="#000"/>
<rect x="823" y="362" width="5" height="7" fill="#000"/><rect x="824" y="363" width="3" height="5" fill="#fff"/>
<rect x="833" y="288" width="1" height="74" fill="#000"/>
<rect x="831" y="316" width="5" height="46" fill="#000"/><rect x="832" y="317" width="3" height="44" fill="#fff"/>
<rect x="841" y="279" width="1" height="47" fill="#000"/>
<rect x="839" y="300" width="5" height="16" fill="#000"/><rect x="840" y="301" width="3" height="14" fill="#fff"/>
<rect x="849" y="285" width="1" height="29" fill="#000"/>
<rect x="847" y="293" width="5" height="7" fill="#000"/><rect x="848" y="294" width="3" height="5" fill="#fff"/>
<rect x="857" y="258" width="1" height="37" fill="#000"/>
<rect x="855" y="268" width="5" height="26" fill="#000"/><rect x="856" y="269" width="3" height="24" fill="#fff"/>
<rect x="865" y="247" width="1" height="29" fill="#000"/>
<rect x="863" y="254" width="5" height="14" fill="#000"/><rect x="864" y="255" width="3" height="12" fill="#fff"/>
<rect x="873" y="234" width="1" height="26" fill="#000"/>
<rect x="871" y="240" width="5" height="14" fill="#000"/><rect x="872" y="241" width="3" height="12" fill="#fff"/>
<rect x="881" y="222" width="1" height="37" fill="#000"/>
<rect x="879" y="240" width="5" height="10" fill="#000"/>
<rect x="889" y="231" width="1" height="29" fill="#000"/>
<rect x="887" y="243" width="5" height="7" fill="#000"/><rect x="888" y="244" width="3" height="5" fill="#fff"/>
<rect x="897" y="208" width="1" height="47" fill="#000"/>
<rect x="895" y="239" width="5" height="5" fill="#000"/><rect x="896" y="240" width="3" height="3" fill="#fff"/>
<rect x="905" y="215" width="1" height="26" fill="#000"/>
<rect x="903" y="235" width="5" height="4" fill="#000"/><rect x="904" y="236" width="3" height="2" fill="#fff"/>
<rect x="913" y="197" width="1" height="41" fill="#000"/>
<rect x="911" y="203" width="5" height="32" fill="#000"/><rect x="912" y="204" width="3" height="30" fill="#fff"/>
<rect x="921" y="196" width="1" height="15" fill="#000"/>
<rect x="919" y="201" width="5" height="3" fill="#000"/><rect x="920" y="202" width="3" height="1" fill="#fff"/>
<rect x="929" y="198" width="1" height="62" fill="#000"/>
<rect x="927" y="201" width="5" height="48" fill="#000"/>
<rect x="937" y="224" width="1" height="56" fill="#000"/>
<rect x="935" y="248" width="5" height="28" fill="#000"/>
<rect x="945" y="263" width="1" height="61" fill="#000"/>
<rect x="943" y="275" width="5" height="42" fill="#000"/>
<rect x="953" y="307" width="1" height="26" fill="#000"/>
<rect x="951" y="318" width="5" height="2" fill="#000"/>
<rect x="961" y="305" width="1" height="25" fill="#000"/>
<rect x="959" y="311" width="5" height="9" fill="#000"/><rect x="960" y="312" width="3" height="7" fill="#fff"/>
<rect x="969" y="297" width="1" height="23" fill="#000"/>
<rect x="967" y="311" width="5" height="7" fill="#000"/>
<rect x="977" y="313" width="1" height="15" fill="#000"/>
<rect x="975" y="317" width="5" height="5" fill="#000"/>
</g>
<path d="M1004.5 257.5H1013.5V271.5H1019L1009 282L999 271.5H1004.5Z" fill="none" stroke="#ff0000" stroke-width="1.6"/>
<g shape-rendering="crispEdges">
<path d="M8.5 109.5H1239.5V683.5H8.5Z" fill="none" stroke="#000" stroke-width="1"/>
<path d="M986 110H997L991.5 115.5Z" fill="#7a8796"/>
<rect x="1240" y="117" width="2" height="1" fill="#000"/>
<rect x="1240" y="150" width="2" height="1" fill="#000"/>
<rect x="1240" y="183" width="2" height="1" fill="#000"/>
<rect x="1240" y="216" width="2" height="1" fill="#000"/>
<rect x="1240" y="249" width="2" height="1" fill="#000"/>
<rect x="1240" y="282" width="2" height="1" fill="#000"/>
<rect x="1240" y="315" width="2" height="1" fill="#000"/>
<rect x="1240" y="349" width="2" height="1" fill="#000"/>
<rect x="1240" y="382" width="2" height="1" fill="#000"/>
<rect x="1240" y="415" width="2" height="1" fill="#000"/>
<rect x="1240" y="448" width="2" height="1" fill="#000"/>
<rect x="1240" y="481" width="2" height="1" fill="#000"/>
<rect x="1240" y="514" width="2" height="1" fill="#000"/>
<rect x="1240" y="547" width="2" height="1" fill="#000"/>
<rect x="1240" y="580" width="2" height="1" fill="#000"/>
<rect x="1240" y="613" width="2" height="1" fill="#000"/>
<rect x="1240" y="646" width="2" height="1" fill="#000"/>
<rect x="1240" y="680" width="2" height="1" fill="#000"/>
<rect x="9" y="684" width="1" height="3" fill="#000"/>
<rect x="73" y="684" width="1" height="3" fill="#000"/>
<rect x="137" y="684" width="1" height="3" fill="#000"/>
<rect x="201" y="684" width="1" height="3" fill="#000"/>
<rect x="265" y="684" width="1" height="3" fill="#000"/>
<rect x="329" y="684" width="1" height="3" fill="#000"/>
<rect x="393" y="684" width="1" height="3" fill="#000"/>
<rect x="457" y="684" width="1" height="3" fill="#000"/>
<rect x="521" y="684" width="1" height="3" fill="#000"/>
<rect x="585" y="684" width="1" height="3" fill="#000"/>
<rect x="649" y="684" width="1" height="3" fill="#000"/>
<rect x="713" y="684" width="1" height="3" fill="#000"/>
<rect x="777" y="684" width="1" height="3" fill="#000"/>
<rect x="841" y="684" width="1" height="3" fill="#000"/>
<rect x="905" y="684" width="1" height="3" fill="#000"/>
<rect x="969" y="684" width="1" height="3" fill="#000"/>
</g>
<text x="1245.5" y="120.3" stroke="#000">1.24100</text>
<text x="1245.5" y="153.3" stroke="#000">1.23955</text>
<text x="1245.5" y="186.3" stroke="#000">1.23810</text>
<text x="1245.5" y="219.3" stroke="#000">1.23660</text>
<text x="1245.5" y="252.3" stroke="#000">1.23515</text>
<text x="1245.5" y="285.3" stroke="#000">1.23370</text>
<text x="1245.5" y="318.3" stroke="#000">1.23220</text>
<text x="1245.5" y="352.3" stroke="#000">1.23070</text>
<text x="1245.5" y="385.3" stroke="#000">1.22925</text>
<text x="1245.5" y="418.3" stroke="#000">1.22780</text>
<text x="1245.5" y="451.3" stroke="#000">1.22630</text>
<text x="1245.5" y="484.3" stroke="#000">1.22485</text>
<text x="1245.5" y="517.3" stroke="#000">1.22340</text>
<text x="1245.5" y="550.3" stroke="#000">1.22190</text>
<text x="1245.5" y="583.3" stroke="#000">1.22045</text>
<text x="1245.5" y="616.3" stroke="#000">1.21900</text>
<text x="1245.5" y="649.3" stroke="#000">1.21750</text>
<text x="1245.5" y="683.3" stroke="#000">1.21600</text>
<text x="8.7" y="696" stroke="#000">17 Dec 2013</text>
<text x="72.7" y="696" stroke="#000">18 Dec 12:00</text>
<text x="136.7" y="696" stroke="#000">19 Dec 20:00</text>
<text x="200.7" y="696" stroke="#000">23 Dec 04:00</text>
<text x="264.7" y="696" stroke="#000">24 Dec 12:00</text>
<text x="328.7" y="696" stroke="#000">27 Dec 08:00</text>
<text x="392.7" y="696" stroke="#000">30 Dec 16:00</text>
<text x="456.7" y="696" stroke="#000">2 Jan 13:00</text>
<text x="520.7" y="696" stroke="#000">3 Jan 20:00</text>
<text x="584.7" y="696" stroke="#000">7 Jan 04:00</text>
<text x="648.7" y="696" stroke="#000">8 Jan 12:00</text>
<text x="712.7" y="696" stroke="#000">9 Jan 20:00</text>
<text x="776.7" y="696" stroke="#000">13 Jan 04:00</text>
<text x="840.7" y="696" stroke="#000">14 Jan 12:00</text>
<text x="904.7" y="696" stroke="#000">15 Jan 20:00</text>
<text x="968.7" y="696" stroke="#000">17 Jan 04:00</text>
<rect x="1242" y="264" width="39" height="11" fill="#0000cd" shape-rendering="crispEdges"/><text x="1245.5" y="273" fill="#fff" stroke="#fff">1.23421</text>
<rect x="1242" y="316" width="39" height="11" fill="#000" shape-rendering="crispEdges"/><text x="1245.5" y="325" fill="#fff" stroke="#fff">1.23191</text>
<rect x="23" y="112" width="202" height="11" fill="#fff"/>
<path d="M12 116H19L15.5 120Z" fill="#000"/>
<text x="23.6" y="120.5" stroke="#000" textLength="55" lengthAdjust="spacing">EURCHF,H4</text>
<text x="84.3" y="120.5" stroke="#000">1.23214</text>
<text x="120.5" y="120.5" stroke="#000">1.23231</text>
<text x="156.7" y="120.5" stroke="#000">1.23169</text>
<text x="192.9" y="120.5" stroke="#000">1.23191</text>
</svg>
<div class="abs" style="left:4px;top:703px;width:1280px;height:1px;background:#000"></div>
<div class="abs" style="left:4px;top:704px;width:1279px;height:19px;background:#dcdcdc"></div>
<div class="abs" style="left:4px;top:704px;width:2px;height:18px;background:#8a8878"></div>
<div class="abs" style="left:4px;top:723px;width:1280px;height:1px;background:#f0f0f0"></div>
<div class="tab" style="left:18.4px">EURUSD,H1</div>
<div class="tab" style="left:98.5px">USDCHF,H4</div>
<div class="tab" style="left:177.5px">GBPUSD,M30</div>
<div class="tab" style="left:262px">USDJPY,H4</div>
<div class="tab" style="left:339.5px">EURGBP,H4</div>
<div class="tab" style="left:419px">AUDNZD,H1</div>
<div class="tab" style="left:498.5px">GBPJPY,H1</div>
<div class="tab" style="left:653.5px">USDCHF,Daily</div>
<div class="tab" style="left:742.5px">USDJPY,H1</div>
<div class="tab" style="left:819.5px">USDCAD,Daily</div>
<div class="tab" style="left:911px">AUDUSD,H1</div>
<div class="tab" style="left:991.5px">GBPCHF,H1</div>
<div class="tab" style="left:1070.5px">EURJPY,M15</div>
<div class="tab" style="left:1154.5px">XAUUSD,H4</div>
<div class="tab" style="left:1234.5px">NZ</div>
<div class="tsep" style="left:88px"></div>
<div class="tsep" style="left:168px"></div>
<div class="tsep" style="left:252px"></div>
<div class="tsep" style="left:328px"></div>
<div class="tsep" style="left:408px"></div>
<div class="tsep" style="left:488px"></div>
<div class="tsep" style="left:732px"></div>
<div class="tsep" style="left:808px"></div>
<div class="tsep" style="left:900px"></div>
<div class="tsep" style="left:980px"></div>
<div class="tsep" style="left:1060px"></div>
<div class="tsep" style="left:1144px"></div>
<div class="tsep" style="left:1224px"></div>
<div class="abs" style="left:564px;top:703px;width:80px;height:19px;background:#fff;border:1px solid #000;border-top:none"></div>
<div class="tab" style="left:574.4px;color:#000">EURCHF,H4</div>
<div class="abs" style="left:1256px;top:709.5px;width:0;height:0;border-top:3.5px solid transparent;border-bottom:3.5px solid transparent;border-right:3.5px solid #a4a4a4"></div>
<div class="abs" style="left:1272.5px;top:709.5px;width:0;height:0;border-top:3.5px solid transparent;border-bottom:3.5px solid transparent;border-left:3.5px solid #000"></div>
<div class="abs" style="left:4px;top:724px;width:1280px;height:20px;background:#e1e1e1"></div>
<div class="t" style="left:6px;top:727.5px;font-size:10.9px">Для справки, нажмите F1</div>
<div class="t" style="left:568.4px;top:727.5px;font-size:10.9px">Default</div>
<div class="t" style="left:1179px;top:727.5px;font-size:10.6px">130/0 kb</div>
<div class="ssep" style="left:563px"></div>
<div class="ssep" style="left:672px"></div>
<div class="ssep" style="left:773px"></div>
<div class="ssep" style="left:845px"></div>
<div class="ssep" style="left:916px"></div>
<div class="ssep" style="left:985px"></div>
<div class="ssep" style="left:1056px"></div>
<div class="ssep" style="left:1122px"></div>
<svg class="abs" style="left:1128px;top:729px" width="24" height="12" viewBox="0 0 24 12" shape-rendering="crispEdges"><rect x="0.0" y="0" width="1.4" height="12.0" fill="#4e7a1e"/><rect x="0.0" y="12.0" width="1.4" height="0.0" fill="#a01010"/><rect x="2.4" y="0" width="1.4" height="10.8" fill="#4e7a1e"/><rect x="2.4" y="10.8" width="1.4" height="1.2" fill="#a01010"/><rect x="4.8" y="0" width="1.4" height="9.6" fill="#4e7a1e"/><rect x="4.8" y="9.6" width="1.4" height="2.4" fill="#a01010"/><rect x="7.199999999999999" y="0" width="1.4" height="8.4" fill="#4e7a1e"/><rect x="7.199999999999999" y="8.4" width="1.4" height="3.6" fill="#a01010"/><rect x="9.6" y="0" width="1.4" height="7.2" fill="#4e7a1e"/><rect x="9.6" y="7.2" width="1.4" height="4.8" fill="#a01010"/><rect x="12.0" y="0" width="1.4" height="6.0" fill="#4e7a1e"/><rect x="12.0" y="6.0" width="1.4" height="6.0" fill="#a01010"/><rect x="14.399999999999999" y="0" width="1.4" height="4.8" fill="#4e7a1e"/><rect x="14.399999999999999" y="4.8" width="1.4" height="7.2" fill="#a01010"/><rect x="16.8" y="0" width="1.4" height="3.6" fill="#4e7a1e"/><rect x="16.8" y="3.6" width="1.4" height="8.4" fill="#a01010"/><rect x="19.2" y="0" width="1.4" height="2.4" fill="#4e7a1e"/><rect x="19.2" y="2.4" width="1.4" height="9.6" fill="#a01010"/><rect x="21.599999999999998" y="0" width="1.4" height="1.2" fill="#4e7a1e"/><rect x="21.599999999999998" y="1.2" width="1.4" height="10.8" fill="#a01010"/></svg>
<svg class="abs" style="left:1268px;top:728px" width="16" height="16" viewBox="0 0 16 16"><path d="M3 16L16 3M7 16L16 7M11 16L16 11M15 16L16 15" stroke="#8e8e8e" stroke-width="1.2"/><path d="M2 16L16 2M6 16L16 6M10 16L16 10" stroke="#fff" stroke-width="1"/></svg>
<div class="abs" style="left:4px;top:744px;width:1280px;height:1px;background:#56585c"></div>
<div class="abs" style="left:4px;top:745px;width:1280px;height:3px;background:#8a8c90"></div>
<div class="abs" style="left:4px;top:745px;width:41px;height:3px;background:linear-gradient(to bottom,#f79a2e,#e8780a);border-radius:0 3px 0 0"></div>
</body></html>
